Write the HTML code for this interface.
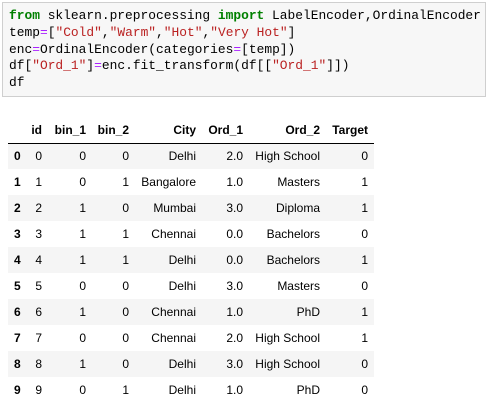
<!DOCTYPE html>
<html><head><style>
body{margin:0;width:489px;height:412px;background:#fff;overflow:hidden;position:relative}
.code{position:absolute;left:2px;top:2px;width:484px;height:95px;background:#f7f7f7;border:1px solid #cfcfcf;box-sizing:border-box;overflow:hidden}
pre{margin:0;position:absolute;left:6px;top:5px;font-family:"Liberation Mono",monospace;font-size:12.9px;line-height:16.8px;color:#000}
.k{color:#008000;font-weight:bold}.s{color:#ba2121}.o{color:#aa22ff}
table{position:absolute;left:8px;top:118px;border-collapse:collapse;table-layout:fixed;width:366px;font-family:"Liberation Sans",sans-serif;font-size:12px;color:#000}
th,td{text-align:right;padding:0 6px 0 0;height:26px;white-space:nowrap;box-sizing:border-box}
thead th{height:25px;border-bottom:1px solid #000;vertical-align:middle}
tbody tr:nth-child(odd){background:#f5f5f5}
tbody th{text-align:left;padding-left:6px}
</style></head><body>
<div class="code"><pre><span class="k">from</span> sklearn.preprocessing <span class="k">import</span> LabelEncoder,OrdinalEncoder
temp<span class="o">=</span>[<span class="s">"Cold"</span>,<span class="s">"Warm"</span>,<span class="s">"Hot"</span>,<span class="s">"Very Hot"</span>]
enc<span class="o">=</span>OrdinalEncoder(categories<span class="o">=</span>[temp])
df[<span class="s">"Ord_1"</span>]<span class="o">=</span>enc.fit_transform(df[[<span class="s">"Ord_1"</span>]])
df</pre></div>
<table>
<colgroup><col style="width:16px"><col style="width:24px"><col style="width:44px"><col style="width:43px"><col style="width:67px"><col style="width:47px"><col style="width:77px"><col style="width:48px"></colgroup>
<thead><tr><th></th><th>id</th><th>bin_1</th><th>bin_2</th><th>City</th><th>Ord_1</th><th>Ord_2</th><th>Target</th></tr></thead>
<tbody>
<tr><th>0</th><td>0</td><td>0</td><td>0</td><td>Delhi</td><td>2.0</td><td>High School</td><td>0</td></tr>
<tr><th>1</th><td>1</td><td>0</td><td>1</td><td>Bangalore</td><td>1.0</td><td>Masters</td><td>1</td></tr>
<tr><th>2</th><td>2</td><td>1</td><td>0</td><td>Mumbai</td><td>3.0</td><td>Diploma</td><td>1</td></tr>
<tr><th>3</th><td>3</td><td>1</td><td>1</td><td>Chennai</td><td>0.0</td><td>Bachelors</td><td>0</td></tr>
<tr><th>4</th><td>4</td><td>1</td><td>1</td><td>Delhi</td><td>0.0</td><td>Bachelors</td><td>1</td></tr>
<tr><th>5</th><td>5</td><td>0</td><td>0</td><td>Delhi</td><td>3.0</td><td>Masters</td><td>0</td></tr>
<tr><th>6</th><td>6</td><td>1</td><td>0</td><td>Chennai</td><td>1.0</td><td>PhD</td><td>1</td></tr>
<tr><th>7</th><td>7</td><td>0</td><td>0</td><td>Chennai</td><td>2.0</td><td>High School</td><td>1</td></tr>
<tr><th>8</th><td>8</td><td>1</td><td>0</td><td>Delhi</td><td>3.0</td><td>High School</td><td>0</td></tr>
<tr><th>9</th><td>9</td><td>0</td><td>1</td><td>Delhi</td><td>1.0</td><td>PhD</td><td>0</td></tr>
</tbody></table>
</body></html>
